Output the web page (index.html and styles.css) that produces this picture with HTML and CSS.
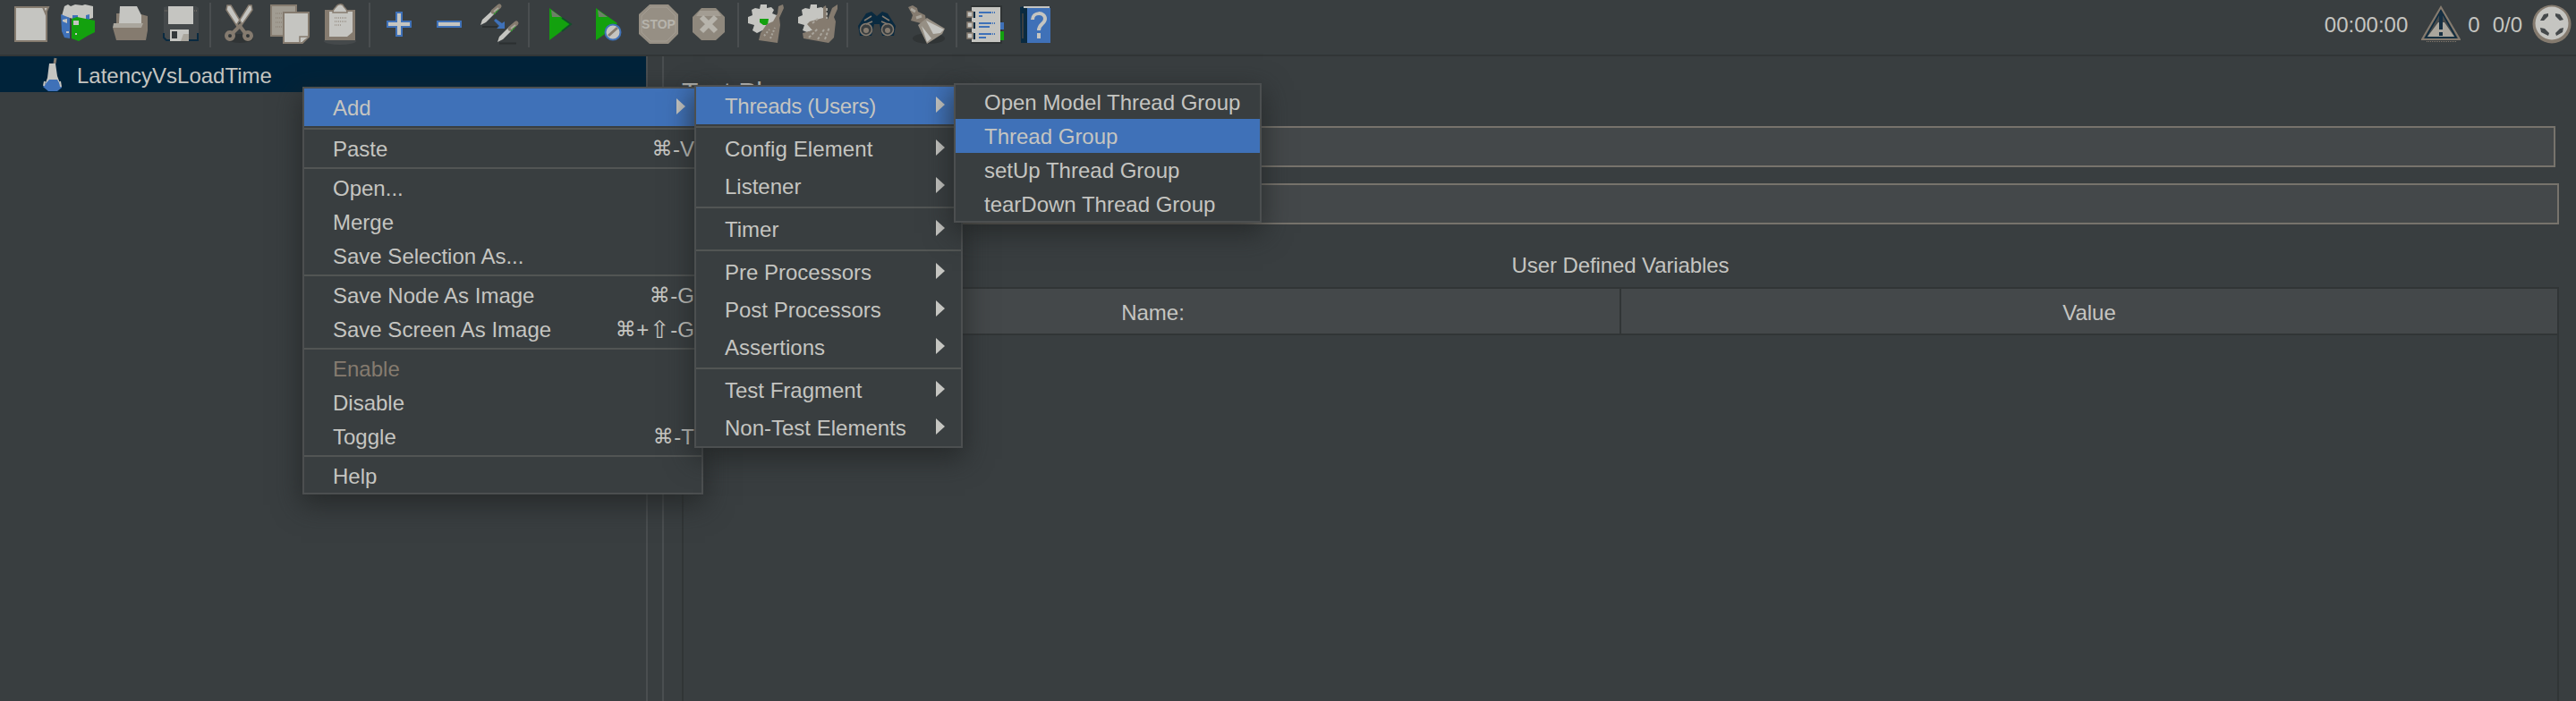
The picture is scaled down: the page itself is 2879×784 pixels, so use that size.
FILE: index.html
```html
<!DOCTYPE html>
<html lang="en">
<head>
<meta charset="utf-8">
<title>Apache JMeter</title>
<link rel="stylesheet" href="styles.css">
</head>
<body>
<div class="app">
  <header class="toolbar">
    <div class="tools">
      <svg class="tool" viewBox="0 0 56 54"><path class="paper edge" d="M11 8H46V46H11Z"/><path class="paper edge" d="M42 8H48L45 15Z"/></svg>
      <svg class="tool" viewBox="0 0 56 54"><path class="paper" d="M10 7L14 5 17 7 22 5 30 6 33 5 42 7V20L32 23 20 21 7 18Z"/><path class="blue" d="M6 16L16 20V43L10 42 7 35Z"/><path class="blue" d="M19 17H25V21H19ZM34 17L38 16V22H34Z"/><path class="green" d="M18 21L24 19 44 23V36L36 40 26 46 18 43Z"/><path class="paper" d="M8 22L13 21V26L8 24ZM20 23H26V28H20ZM12 35H15V37H12ZM22 37H24V39H22Z"/></svg>
      <svg class="tool" viewBox="0 0 56 54"><path class="tan" d="M12 15H36L47 18V34L45 45H12Z"/><path class="paper" d="M16 7H35L40 17V26H15Z"/><path d="M9 26H42L40 31H8Z" fill="#aaa69d"/><path class="tan" d="M8 31H44L45 45H12Z"/></svg>
      <svg class="tool" viewBox="0 0 56 54"><path class="steel" d="M9 8L13 7H45L48 9V45H12L9 42Z"/><path class="navyline" d="M9 37V42L12 45H47V37"/><path class="paper" d="M14 7H42V27H14ZM16 33H37V46H16Z"/><path d="M18 35H24V43H18Z" fill="#34383a"/><path d="M31 38H37V46H28Z" fill="#aaa69d"/><path class="dot" d="M10 12H13M43 12H47"/></svg>
      <i class="sep"></i>
      <svg class="tool" viewBox="0 0 56 54"><ellipse cx="28" cy="43" rx="15" ry="5" fill="#303435"/><circle class="loop" cx="17" cy="40" r="4"/><circle class="loop" cx="37" cy="40" r="4"/><path class="loop" d="M20 37L28 29 34 37"/><path class="paper edge1" d="M14 6L18 6 30 26 26 31 13 11ZM41 6L38 6 25 27 28 31 42 11Z"/></svg>
      <svg class="tool" viewBox="0 0 56 54"><path d="M7 6H35V40H7Z" fill="#a19c92" stroke="#857b6f" stroke-width="2"/><path class="dot" d="M12 15H22M12 20H21M12 25H21M12 30H20"/><path class="paper edge" d="M21 14H49V41L42 48H21Z"/><path class="paper edge1" d="M39 48V41H49"/></svg>
      <svg class="tool" viewBox="0 0 56 54"><ellipse cx="28" cy="46" rx="18" ry="4" fill="#45494b"/><path class="tan" d="M11 11H45V45H11Z"/><path class="paper" d="M16 13H42V36L36 41H16Z"/><path class="paper edge1" d="M20 14C20 10 23 9 24 7 26 4 31 4 32 7 33 9 36 10 36 14Z"/><path class="dot" d="M22 20H35M22 24H35M22 28H30"/></svg>
      <i class="sep"></i>
      <svg class="tool" viewBox="0 0 56 54"><path class="paper rim" d="M25 14H31V24H41V30H31V40H25V30H15V24H25Z"/></svg>
      <svg class="tool" viewBox="0 0 56 54"><path class="paper rim" d="M15 24H41V30H15Z"/></svg>
      <svg class="tool" viewBox="0 0 56 54"><path d="M9 30H26M28 48.500H47" stroke="#2b2f30" stroke-width="2"/><path class="paper" d="M7 28L9 22 21 11 24 14 13 25ZM26 47L28 41 39 30 43 33 32 44Z"/><path d="M21 13L28 7M40 32L47 26" stroke="#857b6f" stroke-width="5" stroke-linecap="round"/><path d="M22 13L27 9M41 32L46 28" stroke="#aaa69d" stroke-width="2"/><path d="M22 16L27 11M41 35L46 30" stroke="#2f9a2c" stroke-width="1.500" stroke-dasharray="2 1"/><path class="blue" d="M22 23L24 21 31 26 34 24V32H25L28 29Z"/></svg>
      <i class="sep"></i>
      <svg class="tool" viewBox="0 0 56 54"><path class="green" d="M18 9L42 27 18 45Z"/><path d="M20 11L31 19H21Z" fill="#6e7f68"/><path d="M32 20L42 27 32 35" fill="none" stroke="#12502a" stroke-width="2"/></svg>
      <svg class="tool" viewBox="0 0 56 54"><path class="green" d="M14 9L38 26 30 34 14 45Z"/><path d="M16 11L27 19H17Z" fill="#6e7f68"/><circle class="paper rim" cx="33" cy="36" r="8.500"/><path d="M28 40L38 31" stroke="#857b6f" stroke-width="3"/></svg>
      <svg class="tool" viewBox="0 0 56 54"><path d="M18 5H39L50 16V38L39 49H18L6 38V16Z" fill="#968f84"/><path d="M19 8H37L47 18V36L37 46H19L9 36V18Z" fill="none" stroke="#a39d93"/><text class="stop" x="28" y="32">STOP</text></svg>
      <svg class="tool" viewBox="0 0 56 54"><path d="M20 9H36L46 19V36L36 45H20L10 36V19Z" fill="#8f887d"/><path d="M18 12H38L42 18H14Z" fill="#a39d93"/><path d="M20 19L36 35M36 19L20 35" stroke="#b7b4ac" stroke-width="6"/></svg>
      <i class="sep"></i>
      <svg class="tool" viewBox="0 0 56 54"><path class="paper" d="M20 5H27V9L32 8 35 11 33 15 38 17V24L34 27 30 37 22 34 16 37 11 34 13 28 6 26V19L11 17 10 11 14 9 19 10Z"/><path class="green" d="M19 21H29L28 28H23L19 25Z"/><path d="M27 27L34 24 39 15 40 7 45 5 46 9 41 20 42 28 39 48 18 45 20 37Z" fill="#857b6f"/><path d="M24 40L30 33M31 43L36 31" stroke="#aaa69d" stroke-width="2" stroke-dasharray="2 2"/></svg>
      <svg class="tool" viewBox="0 0 56 54"><path class="paper" d="M20 5H27V9L32 8 37 11V30L22 34 16 36 11 34 13 28 6 26V19L11 17 10 11 14 9 19 10Z"/><path d="M19 24L34 20 34 8 37 6 39 22 44 9 50 5 50 10 46 19 48 24 46 42 40 48 12 43 11 37 22 34 16 27Z" fill="#857b6f"/><path d="M22 26L28 21M18 42L28 32M28 44L35 33M36 44L41 30M38 9V21" stroke="#aaa69d" stroke-width="2" stroke-dasharray="3 2"/></svg>
      <i class="sep"></i>
      <svg class="tool" viewBox="0 0 56 54"><path d="M16 15L22 13 28 18 34 13 40 15 49 29 47 40 34 40 31 27H25L22 40 9 40 7 29Z" fill="#0a2a40"/><circle class="lens" cx="16" cy="33" r="6.500"/><circle class="lens" cx="40" cy="33" r="6.500"/><path d="M14 23L22 18M42 23L34 18M16 27L23 24M40 27L33 24" stroke="#857b6f" stroke-width="1.500"/><circle cx="16" cy="34" r="3" fill="#857b6f"/><circle cx="40" cy="34" r="3" fill="#857b6f"/></svg>
      <svg class="tool" viewBox="0 0 56 54"><ellipse cx="30" cy="43" rx="18" ry="6" fill="#303435"/><path d="M7 8L12 6 17 9 18 13 26 17 27 23 21 26 10 23 12 17Z" fill="#857b6f"/><path d="M10 10L15 13M16 20L22 18" stroke="#aaa69d" stroke-width="3"/><path d="M18 28L28 20 48 32 45 38 28 49Z" fill="#968f84"/><path class="paper" d="M27 23L47 33 43 37 35 38ZM22 29L33 43 28 47Z"/></svg>
      <i class="sep"></i>
      <svg class="tool" viewBox="0 0 56 54"><path class="paper" d="M12 8H44V47H12Z"/><path d="M11 7H45V48H11" fill="none" stroke="#2c3031" stroke-width="1.500"/><path class="paper edge1" d="M7 13H13V19H7ZM7 25H13V31H7ZM7 37H13V43H7Z"/><path d="M15 13V20M15 25V32M15 37V44" stroke="#0a2a40" stroke-width="2"/><path class="rule" d="M20 14H34M20 18H24M20 26H34M20 30H32M20 38H34M20 42H28"/><path class="rule" d="M35 14H39M35 26H39M35 38H39" stroke-dasharray="1 1"/><path class="blue" d="M44 25H48V33H44Z"/><path class="green" d="M44 35H48V45H44Z"/></svg>
      <svg class="tool" viewBox="0 0 56 54"><path d="M10 8L16 7 19 9V48H11Z" fill="#0a2a40"/><path class="blue" d="M18 9H44V48H18Z"/><path class="paper" d="M14 7H43V9H14Z"/><path d="M13 15V43" stroke="#3a3f41" stroke-width="2"/><path d="M24 22C24 13 38 13 38 21 38 27 31 26 31 34M31 37V43" fill="none" stroke="#c5c5c1" stroke-width="4"/></svg>
    </div>
    <div class="status">
      <span class="clock">00:00:00</span>
      <svg class="warn" viewBox="0 0 44 44"><path d="M22 3L43 39H1Z" fill="#45494b" stroke="#857b6f" stroke-width="2"/><path d="M22 7L39 37H5Z" fill="none" stroke="#0a2a40" stroke-width="1.500"/><path d="M19 20L7 36H37L26 20Z" fill="#aaa69d"/><path d="M22 8V28M22 31V35" stroke="#173043" stroke-width="4"/><path d="M6 41.500H40" stroke="#857b6f" stroke-dasharray="1 1"/></svg>
      <span class="errors">0</span>
      <span class="threads">0/0</span>
      <svg class="ball" viewBox="0 0 44 44"><circle cx="22" cy="22" r="21.500" fill="#857b6f"/><circle cx="22" cy="21" r="18.500" fill="#c5c5c1"/><path d="M9 18L13 11 18 10V13L13 18ZM26 10L31 11 35 17 31 18 26 13ZM9 26L14 27 19 32 18 35 10 31ZM35 26L31 27 26 32 27 35 34 31Z" fill="#45494b"/></svg>
    </div>
  </header>
  <main class="body">
    <aside class="tree">
      <div class="node">
        <svg class="flask" viewBox="0 0 24 40"><path d="M14 8L15 2" stroke="#857b6f" stroke-width="3"/><path class="paper" d="M8 8H15L17 22 22 35H2L6 24Z"/><path class="blue" d="M8 26H17L22 35 17 39 7 39 1 34Z"/><path d="M3 28L2 33M20 28L21 34" stroke="#c5c5c1" stroke-width="2"/></svg>
        <span class="nodename">LatencyVsLoadTime</span>
      </div>
    </aside>
    <div class="divider"></div>
    <section class="panel">
      <h1 class="title">Test Plan</h1>
      <div class="field first"></div>
      <div class="field"></div>
      <div class="caption">User Defined Variables</div>
      <div class="table">
        <div class="th">Name:</div>
        <div class="th">Value</div>
      </div>
    </section>
  </main>

  <nav class="menu main">
    <div class="item tall on"><span>Add</span><b class="arrow"></b></div>
    <hr>
    <div class="item"><span>Paste</span><kbd><i class="cmd">⌘</i>-V</kbd></div>
    <hr>
    <div class="item"><span>Open...</span></div>
    <div class="item"><span>Merge</span></div>
    <div class="item"><span>Save Selection As...</span></div>
    <hr>
    <div class="item"><span>Save Node As Image</span><kbd><i class="cmd">⌘</i>-G</kbd></div>
    <div class="item"><span>Save Screen As Image</span><kbd><i class="cmd">⌘</i>+<i class="cmd shift">⇧</i>-G</kbd></div>
    <hr>
    <div class="item off"><span>Enable</span></div>
    <div class="item"><span>Disable</span></div>
    <div class="item"><span>Toggle</span><kbd><i class="cmd">⌘</i>-T</kbd></div>
    <hr>
    <div class="item"><span>Help</span></div>
  </nav>
  <nav class="menu add">
    <div class="item tall on"><span class="tight">Threads (Users)</span><b class="arrow"></b></div>
    <hr>
    <div class="item tall"><span class="loose">Config Element</span><b class="arrow"></b></div>
    <div class="item tall"><span>Listener</span><b class="arrow"></b></div>
    <hr>
    <div class="item tall"><span>Timer</span><b class="arrow"></b></div>
    <hr>
    <div class="item tall"><span>Pre Processors</span><b class="arrow"></b></div>
    <div class="item tall"><span>Post Processors</span><b class="arrow"></b></div>
    <div class="item tall"><span>Assertions</span><b class="arrow"></b></div>
    <hr>
    <div class="item tall"><span>Test Fragment</span><b class="arrow"></b></div>
    <div class="item tall"><span>Non-Test Elements</span><b class="arrow"></b></div>
  </nav>
  <nav class="menu users">
    <div class="item"><span>Open Model Thread Group</span></div>
    <div class="item on"><span>Thread Group</span></div>
    <div class="item"><span>setUp Thread Group</span></div>
    <div class="item"><span>tearDown Thread Group</span></div>
  </nav>
</div>
</body>
</html>
```
FILE: styles.css
```css
* { box-sizing: border-box; }
body {
  margin: 0;
  background: #393e40;
  color: #c5c5c1;
  font: 24px/28px "Liberation Sans", Arial, sans-serif;
}
.app {
  position: relative;
  width: 2879px;
  height: 784px;
  overflow: hidden;
  display: flex;
  flex-direction: column;
}

/* toolbar */
.toolbar {
  height: 63px;
  flex: none;
  display: flex;
  justify-content: space-between;
  align-items: flex-start;
  border-bottom: 2px solid #313536;
  padding: 0 5px 0 6px;
}
.tools { display: flex; }
.tool { width: 56px; height: 54px; display: block; }
.sep {
  width: 2px;
  height: 50px;
  margin: 3px 4px 0;
  background: #4a4e50;
}
.paper { fill: #c5c5c1; }
.tan { fill: #857b6f; }
.blue { fill: #3f71b8; }
.green { fill: #13a10e; }
.steel { fill: #45494b; }
.edge { stroke: #857b6f; stroke-width: 2; }
.edge1 { stroke: #857b6f; stroke-width: 1.5; }
.rim { stroke: #3f71b8; stroke-width: 2; }
.rule { fill: none; stroke: #3f71b8; stroke-width: 2; }
.loop { fill: none; stroke: #857b6f; stroke-width: 4; }
.lens { fill: #393e40; stroke: #857b6f; stroke-width: 1.5; }
.navyline { fill: none; stroke: #0a2a40; stroke-width: 2; }
.dot { fill: none; stroke: #857b6f; stroke-width: 1; stroke-dasharray: 1 1; }
.stop {
  font: bold 14px "Liberation Sans", Arial, sans-serif;
  text-anchor: middle;
  fill: #b7b4ac;
}
.status { display: flex; align-items: flex-start; padding-top: 5px; }
.status span { padding-top: 9px; line-height: 28px; }
.clock { margin-right: 15px; }
.warn, .ball { width: 44px; height: 44px; display: block; }
.errors { margin: 0 14px 0 8px; }
.threads { margin-right: 11px; }

/* content */
.body { flex: 1; display: flex; min-height: 0; }
.tree { width: 722px; }
.node {
  height: 40px;
  background: #00233a;
  display: flex;
  align-items: center;
  padding-left: 47px;
}
.flask { width: 24px; height: 40px; }
.nodename { margin-left: 15px; padding-top: 3px; line-height: 37px; }
.divider {
  width: 20px;
  border: solid #4a4e50;
  border-width: 0 2px;
}
.panel {
  flex: 1;
  display: flex;
  flex-direction: column;
  padding: 23px 19px 0 20px;
}
.title { margin: 0; font-size: 30px; font-weight: 400; line-height: 34px; height: 55px; flex: none; }
.field {
  height: 46px;
  flex: none;
  margin-left: 240px;
  background: #44484a;
  border: 2px solid #77736c;
}
.field.first { margin: 0 4px 18px 240px; }
.caption {
  flex: none;
  height: 70px;
  padding-top: 32px;
  text-align: center;
  line-height: 28px;
  letter-spacing: -.1px;
}
.table {
  flex: 1;
  display: grid;
  grid-template-columns: 1048px 1fr;
  align-items: start;
  border: solid #313536;
  border-width: 2px 2px 0;
}
.th {
  height: 52px;
  line-height: 54px;
  text-align: center;
  background: #44484a;
  border-bottom: 2px solid #313536;
}
.th:first-child { border-right: 2px solid #313536; padding-left: 3px; }

/* popup menus */
.menu {
  position: absolute;
  background: #393e40;
  border: 2px solid #4c4f50;
  box-shadow: 0 10px 28px 2px rgba(32, 34, 34, .7);
}
.menu hr {
  height: 2px;
  margin: 2px 0;
  border: 0;
  background: #525554;
}
.main { left: 338px; top: 97px; width: 448px; }
.add { left: 776px; top: 95px; width: 300px; }
.users { left: 1066px; top: 93px; width: 344px; }
.item {
  height: 38px;
  line-height: 39px;
  padding: 0 8px 0 32px;
  display: flex;
  justify-content: space-between;
  white-space: nowrap;
}
.item.tall { height: 42px; line-height: 43px; padding-right: 18px; align-items: center; }
.item.on { background: #3f71b8; }
.item.off { color: #857b6f; }
.tight { letter-spacing: -.3px; }
.loose { letter-spacing: .1px; }
.arrow {
  width: 10px;
  height: 18px;
  margin-bottom: 2px;
  background: #c5c5c1;
  clip-path: polygon(0 0, 100% 50%, 0 100%);
}
kbd { font: inherit; display: flex; }
.cmd {
  width: 24px;
  text-align: center;
  font-style: normal;
  font-family: "DejaVu Sans", sans-serif;
  font-size: 23px;
}
.cmd.shift { font-size: 27px; }
```
